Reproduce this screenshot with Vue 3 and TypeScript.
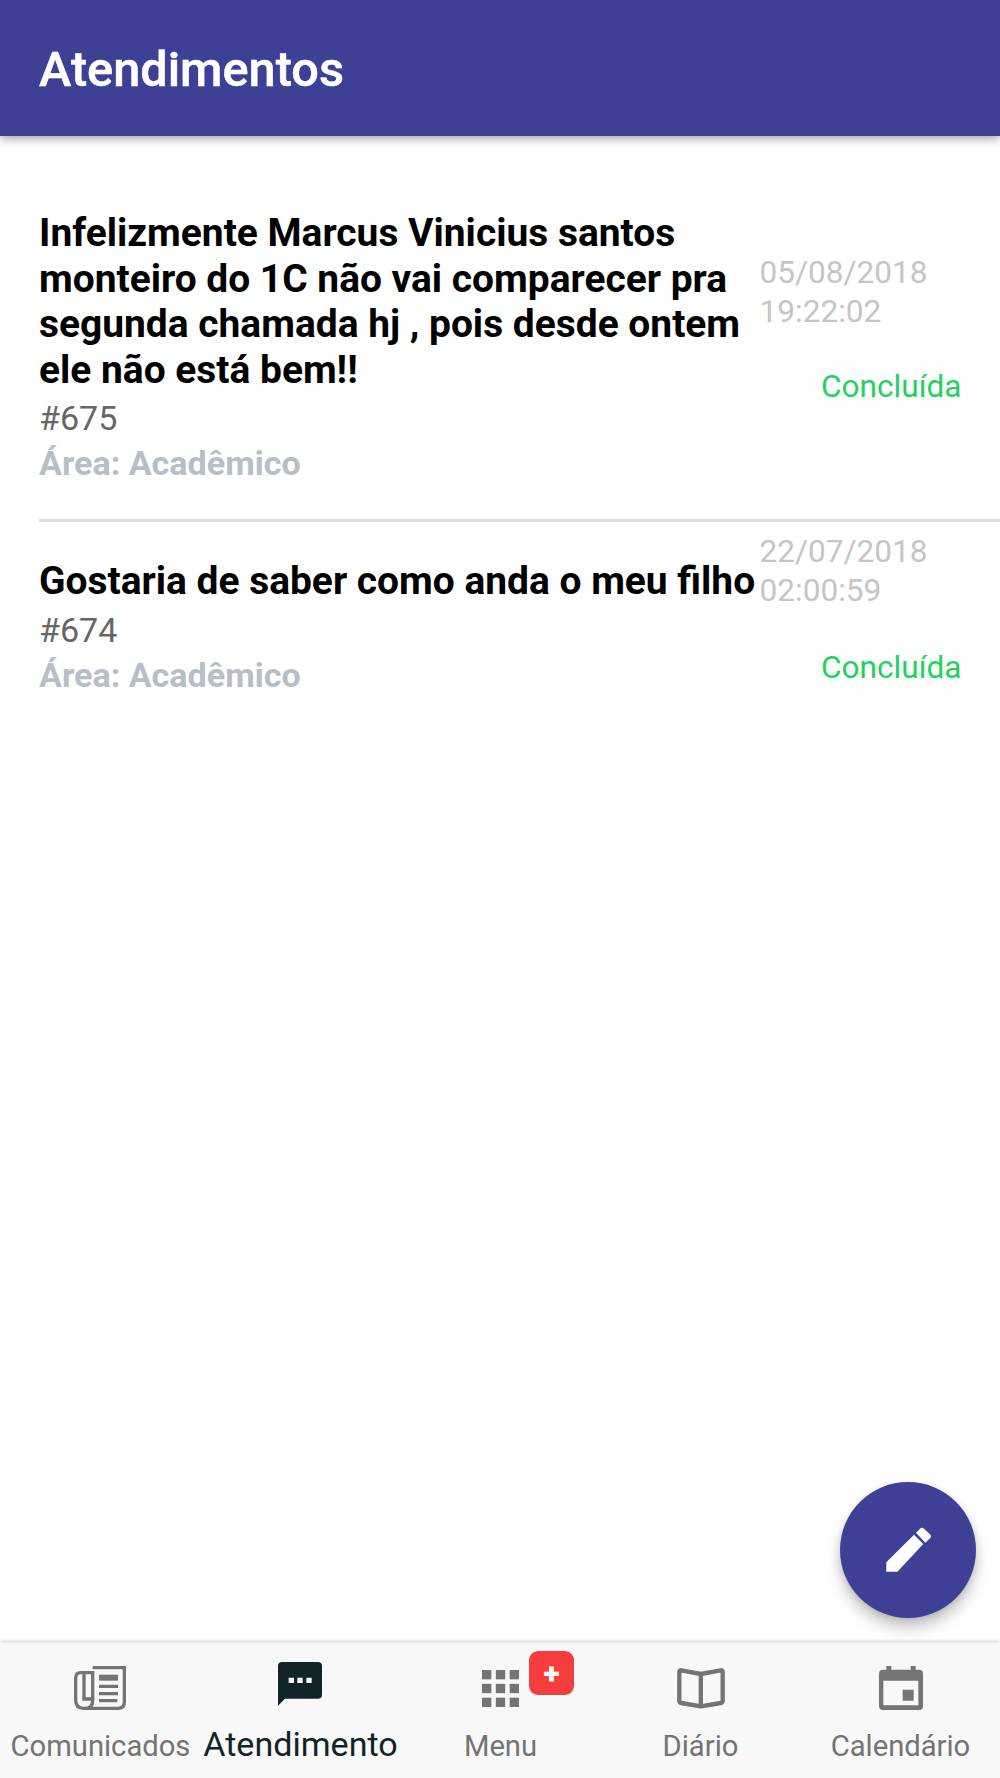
<script setup lang="ts">
interface Ticket {
  id: number
  title: string
  area: string
  date: string
  time: string
  status: string
}

interface Tab {
  key: string
  label: string
  active?: boolean
  badge?: string
}

const tickets: Ticket[] = [
  {
    id: 675,
    title:
      'Infelizmente Marcus Vinicius santos monteiro do 1C não vai comparecer pra segunda chamada hj , pois desde ontem ele não está bem!!',
    area: 'Acadêmico',
    date: '05/08/2018',
    time: '19:22:02',
    status: 'Concluída',
  },
  {
    id: 674,
    title: 'Gostaria de saber como anda o meu filho',
    area: 'Acadêmico',
    date: '22/07/2018',
    time: '02:00:59',
    status: 'Concluída',
  },
]

const tabs: Tab[] = [
  { key: 'news', label: 'Comunicados' },
  { key: 'chat', label: 'Atendimento', active: true },
  { key: 'menu', label: 'Menu', badge: '+' },
  { key: 'diary', label: 'Diário' },
  { key: 'calendar', label: 'Calendário' },
]

const gridSteps = [0, 41.5, 83]
</script>

<template>
  <div class="app">
    <header class="toolbar">
      <h1>Atendimentos</h1>
    </header>

    <main class="list">
      <article v-for="t in tickets" :key="t.id" class="item">
        <div class="info">
          <h2>{{ t.title }}</h2>
          <p class="number">#{{ t.id }}</p>
          <p class="area">Área: {{ t.area }}</p>
        </div>
        <div class="note">
          <p class="date">{{ t.date }}<br />{{ t.time }}</p>
          <p class="status">{{ t.status }}</p>
        </div>
      </article>
    </main>

    <button class="fab" aria-label="Novo atendimento">
      <svg width="46" height="46" viewBox="0 0 138 138" fill="#fff">
        <path d="M1 106 84 23 112 51 34 134H1Z" />
        <path d="M90 17 102 5Q108-1 114 5L132 22Q138 28 132 34L118 47Z" />
      </svg>
    </button>

    <nav class="tabs">
      <a v-for="tab in tabs" :key="tab.key" class="tab" :class="[tab.key, { active: tab.active }]">
        <span class="icon">
          <svg v-if="tab.key === 'news'" width="52" height="44" viewBox="0 0 156 132" fill="none" stroke="currentColor" stroke-width="10">
            <path d="M56 5H151V108Q151 127 132 127H29Q5 127 5 103V37Q5 20 20 20H56V104Q56 127 32 127" />
            <path d="M30 20V99H54" />
            <path d="M75 35H132" stroke-width="18" />
            <path d="M75 61H132M75 83H132M75 104H130" />
          </svg>
          <svg v-else-if="tab.key === 'chat'" width="44" height="44" viewBox="0 0 132 132">
            <path d="M12 0H120Q132 0 132 12V98Q132 110 120 110H21L0 131V12Q0 0 12 0Z" fill="currentColor" />
            <path d="M32 47H48V63H32ZM58 47H74V63H58ZM85 47H101V63H85Z" fill="#f8f8f8" />
          </svg>
          <svg v-else-if="tab.key === 'menu'" width="37" height="37" viewBox="0 0 111 111" fill="currentColor">
            <template v-for="y in gridSteps" :key="y">
              <rect v-for="x in gridSteps" :key="x" :x="x" :y="y" width="28" height="28" />
            </template>
          </svg>
          <svg v-else-if="tab.key === 'diary'" width="48" height="41" viewBox="0 0 144 123" fill="none" stroke="currentColor" stroke-width="13" stroke-linejoin="round">
            <path d="M71.500 18 13 7Q7 6 7 12V98Q7 104 13 105L71.500 115 131 105Q137 104 137 98V12Q137 6 131 7ZV115" />
          </svg>
          <svg v-else width="44" height="44" viewBox="0 0 132 132" fill="currentColor">
            <path fill-rule="evenodd" d="M22 0H37V11H95V0H110V11H120Q132 11 132 23V120Q132 132 120 132H12Q0 132 0 120V23Q0 11 12 11H22ZM13 44V118H118V44ZM71 71H104V104H71Z" />
          </svg>
        </span>
        <span class="label">{{ tab.label }}</span>
        <span v-if="tab.badge" class="badge">{{ tab.badge }}</span>
      </a>
    </nav>
  </div>
</template>

<style>
body {
  margin: 0;
}
</style>

<style scoped>
.app {
  position: relative;
  display: flex;
  flex-direction: column;
  width: 1000px;
  height: 1778px;
  overflow: hidden;
  background: #fff;
  font-family: Roboto, sans-serif;
}

h1,
h2,
p {
  margin: 0;
}

.toolbar {
  display: flex;
  align-items: center;
  flex: none;
  height: 136px;
  padding: 3px 39px 0;
  box-sizing: border-box;
  background: #3e4095;
  color: #fff;
  box-shadow: 0 2px 10px rgba(0, 0, 0, 0.4);
}

h1 {
  font-size: 48.700px;
  line-height: 58px;
  font-weight: 500;
  -webkit-text-stroke: 0.500px currentColor;
}

.list {
  flex: 1;
}

.item {
  display: flex;
  align-items: flex-start;
  margin-left: 39px;
}

.item + .item {
  border-top: 3px solid #dedede;
}

.info {
  width: 720.500px;
  padding: 75.300px 0 36px;
  flex: none;
}

.item + .item .info {
  padding-top: 37.500px;
}

h2 {
  font-size: 38.940px;
  line-height: 45.400px;
  font-weight: 700;
  color: #000;
}

.number,
.area {
  margin-top: 5px;
  font-size: 34.070px;
  line-height: 40px;
  color: #666;
}

.area {
  font-weight: 700;
  color: #b8bec6;
}

.note {
  flex: 1;
  padding: 117px 38.500px 0 0;
  font-size: 31.600px;
  line-height: 39px;
}

.item + .item .note {
  padding-top: 10px;
}

.date {
  color: #c5c5c5;
}

.status {
  margin-top: 36px;
  text-align: right;
  color: #23d160;
}

.item + .item .status {
  margin-top: 38px;
}

.fab {
  position: absolute;
  right: 24px;
  bottom: 160px;
  display: flex;
  align-items: center;
  justify-content: center;
  width: 136px;
  height: 136px;
  padding: 0 0 1px 1px;
  box-sizing: border-box;
  border: 0;
  border-radius: 50%;
  background: #3e4095;
  box-shadow: 0 10px 15px rgba(0, 0, 0, 0.22), 0 2px 6px rgba(0, 0, 0, 0.12);
}

.tabs {
  position: relative;
  display: flex;
  flex: none;
  height: 135px;
  background: #f8f8f8;
  box-shadow: 0 -3px 2px #e6e6e6;
}

.tab {
  position: relative;
  display: flex;
  flex: 1 0 0;
  flex-direction: column;
  align-items: center;
  color: #747474;
}

.icon {
  display: flex;
  align-items: center;
  height: 90px;
  padding-left: 1px;
}

.news .icon,
.chat .icon {
  padding-left: 0;
}

.label {
  margin-top: -4px;
  padding-left: 1px;
  font-size: 29.200px;
  line-height: 34px;
  white-space: nowrap;
}

.tab.active {
  color: #122428;
}

.active .icon {
  height: 81px;
}

.active .label {
  margin-top: 3px;
  font-size: 34.070px;
}

.badge {
  position: absolute;
  left: 129px;
  top: 7.500px;
  width: 45px;
  height: 44px;
  border-radius: 9px;
  background: #f53d3d;
  color: #fff;
  font-size: 30px;
  font-weight: 900;
  line-height: 45px;
  text-align: center;
}
</style>
